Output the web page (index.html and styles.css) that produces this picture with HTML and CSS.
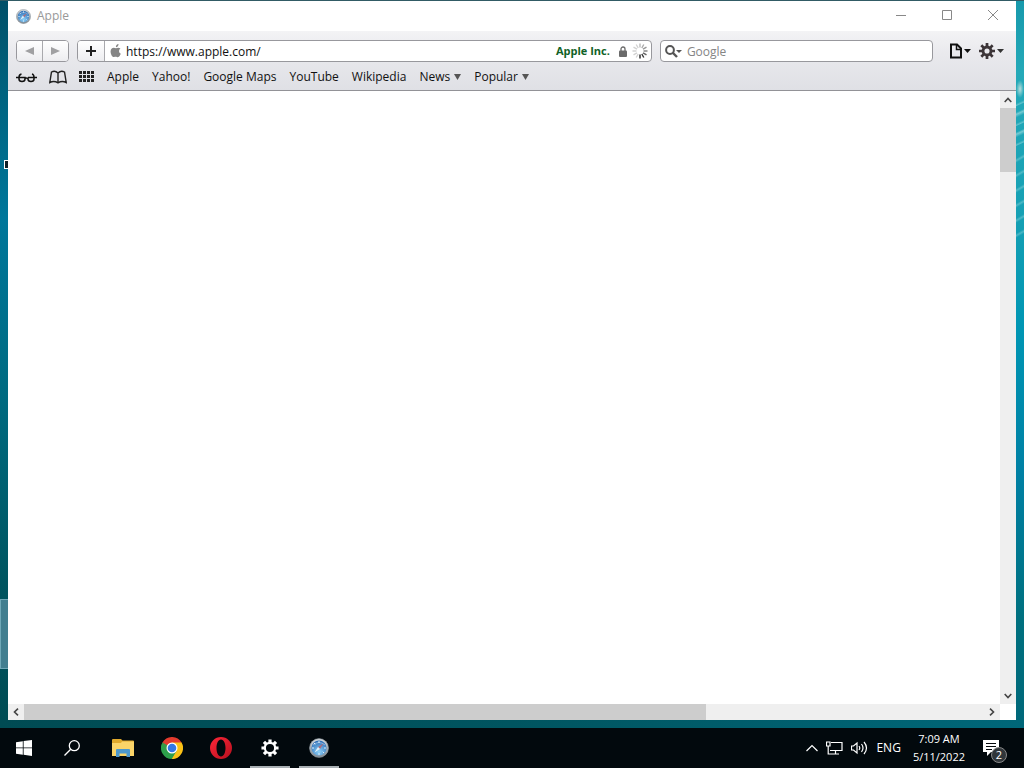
FILE: index.html
```html
<!DOCTYPE html>
<html lang="en">
<head>
<meta charset="utf-8">
<title>Apple</title>
<link rel="stylesheet" href="styles.css">
</head>
<body>
<svg class="defs" aria-hidden="true">
  <defs>
    <linearGradient id="rim" x1="0" y1="0" x2="0" y2="1"><stop offset="0" stop-color="#d5dade"/><stop offset="1" stop-color="#7f8992"/></linearGradient>
    <radialGradient id="sea" cx=".5" cy=".75" r=".7"><stop offset="0" stop-color="#8fd2f8"/><stop offset="1" stop-color="#2f70b8"/></radialGradient>
    <linearGradient id="red" x1="0" y1="0" x2="1" y2="1"><stop offset="0" stop-color="#ff2638"/><stop offset="1" stop-color="#b5101e"/></linearGradient>
    <symbol id="compass" viewBox="0 0 20 20">
      <circle cx="10" cy="10" r="9.600" fill="url(#rim)"/>
      <circle cx="10" cy="10" r="9.400" fill="none" stroke="#8a939b" stroke-width=".6"/>
      <circle cx="10" cy="10" r="7.600" fill="url(#sea)"/>
      <g stroke="#dff0fb" stroke-width="1"><path d="M10 3v2M10 15v2M3 10h2M15 10h2M5 5l1.300 1.300M13.700 13.700L15 15"/></g>
      <path d="M14.500 5.500L11 11 9 9z" fill="#b06a78"/>
      <path d="M5.500 14.500L9 9l2 2z" fill="#e4f1f8"/>
      <path d="M4 7q6-5 12 0" fill="none" stroke="#fff" stroke-opacity=".4"/>
    </symbol>
    <symbol id="cog" viewBox="0 0 20 20">
      <g stroke="currentColor" stroke-width="3.400"><path d="M10 0v5M10 15v5M0 10h5M15 10h5M2.900 2.900l3.500 3.500M13.600 13.600l3.500 3.500M2.900 17.100l3.500-3.500M13.600 6.400l3.500-3.500"/></g>
      <circle cx="10" cy="10" r="5" fill="none" stroke="currentColor" stroke-width="3.600"/>
    </symbol>
  </defs>
</svg>

<main class="desktop">
  <span class="desktop-shortcut"></span>
  <span class="desktop-selection"></span>
  <section class="window">
    <header class="titlebar">
      <svg class="title-icon" viewBox="0 0 20 20"><use href="#compass"/></svg>
      <h1 class="title">Apple</h1>
      <div class="caption-buttons">
        <button class="caption-button" aria-label="Minimize"><svg width="12" height="12" viewBox="0 0 12 12"><path d="M1 5.500h10"/></svg></button>
        <button class="caption-button" aria-label="Maximize"><svg width="12" height="12" viewBox="0 0 12 12"><path d="M1.500 .5h9v9h-9z"/></svg></button>
        <button class="caption-button" aria-label="Close"><svg width="12" height="12" viewBox="0 0 12 12"><path d="M1 0l10 10M11 0L1 10"/></svg></button>
      </div>
    </header>

    <div class="toolbar">
      <div class="controls">
        <div class="nav-buttons">
          <button class="nav-button" aria-label="Back"><svg width="10" height="8" viewBox="0 0 10 8"><path d="M9 0v8L0 4z" fill="#a0a0a2"/></svg></button>
          <button class="nav-button" aria-label="Forward"><svg width="10" height="8" viewBox="0 0 10 8"><path d="M0 0v8l9-4z" fill="#a0a0a2"/></svg></button>
        </div>
        <div class="address">
          <button class="add-button" aria-label="Add bookmark"><svg width="12" height="12" viewBox="0 0 12 12"><path d="M6 1v10M1 6h10" stroke="#222" stroke-width="2"/></svg></button>
          <svg class="favicon" width="12" height="14" viewBox="0 0 12 14"><path d="M6 4.200C4.700 3.600 3.200 3.300 2 4.200.2 5.600.2 8.500 1.400 10.900c.8 1.500 1.700 2.400 2.700 2.100.9-.4 1.800-.5 2.800 0 1.100.6 2.200-.1 3-1.500.4-.6.7-1.200.9-1.700-2.100-.9-2.400-3.900-.3-5.200C9.400 3.300 7.500 3.500 6 4.200zM8.500 0C7 .1 5.700 1.700 5.900 3.200 7.400 3.200 8.700 1.600 8.500 0z" fill="#858585"/></svg>
          <input class="address-input" type="text" aria-label="Address" value="https://www.apple.com/">
          <span class="certificate">Apple Inc.</span>
          <svg class="lock" width="8" height="11" viewBox="0 0 8 11"><path d="M2 5V3a2 2 0 0 1 4 0v2" fill="none" stroke="#6a6a6a" stroke-width="1.300"/><rect y="4.500" width="8" height="6.500" rx="1" fill="#6a6a6a"/></svg>
          <svg class="spinner" width="16" height="16" viewBox="0 0 16 16" stroke-width="1.400"><path d="M8 .5v4" stroke="#bbb"/><path d="M11.800 1.500l-2 3.500" stroke="#aaa"/><path d="M14.500 4.200L11 6.200" stroke="#999"/><path d="M15.500 8h-4" stroke="#888"/><path d="M14.500 11.800L11 9.800" stroke="#666"/><path d="M11.800 14.500l-2-3.500" stroke="#333"/><path d="M8 15.500v-4" stroke="#222"/><path d="M4.200 14.500l2-3.500M1.500 11.800L5 9.800M.5 8h4M1.500 4.200L5 6.200M4.200 1.500l2 3.500" stroke="#d2d2d2"/></svg>
        </div>
        <div class="search">
          <svg width="17" height="13" viewBox="0 0 17 13"><circle cx="5" cy="5" r="3.900" fill="none" stroke="#555" stroke-width="2"/><path d="M8 8l4 4" stroke="#555" stroke-width="2.400"/><path d="M11 5h6l-3 3z" fill="#555"/></svg>
          <input class="search-input" type="text" aria-label="Search" placeholder="Google">
        </div>
        <div class="menus">
          <button class="plain-button" aria-label="Page menu"><svg width="22" height="16" viewBox="0 0 22 16"><path d="M2 1.500h6l4 4V14.500H2z" fill="none" stroke="#111" stroke-width="2"/><path d="M7.500 1v5.500H12.500" fill="none" stroke="#111" stroke-width="1.500"/><path d="M15 6h7l-3.500 4z" fill="#111"/></svg></button>
          <button class="plain-button" aria-label="Settings menu"><svg class="dark" width="25" height="16" viewBox="0 0 25 16"><use href="#cog" width="16" height="16"/><path d="M18 6h7l-3.500 4z" fill="#333"/></svg></button>
        </div>
      </div>

      <nav class="bookmarks">
        <button class="plain-button" aria-label="Reading list"><svg width="21" height="12" viewBox="0 0 21 12"><path d="M0 6.500h9v1.500q0 2.500-3 2.500t-3-2.500V6.500M12 6.500h9M12 6.500V8q0 2.500 3 2.500t3-2.500V6.500M9 7.500q1.500-1.200 3 0M3 6.500q0-3 2.500-3.500M18 6.500q0-3-2-3.500" fill="none" stroke="#111" stroke-width="1.500"/></svg></button>
        <button class="plain-button" aria-label="Bookmarks"><svg width="18" height="14" viewBox="0 0 18 14"><path d="M9 3v9.500M9 3Q6 0 2.500 2L.8 12.500Q5 10.500 9 12.800q4-2.300 8.200-.3L15.500 2Q12 0 9 3z" fill="none" stroke="#222" stroke-width="1.400"/></svg></button>
        <button class="plain-button" aria-label="Top sites"><svg width="16" height="12" viewBox="0 0 16 12"><path d="M0 1.500h16M0 5.500h16M0 9.500h16" stroke="#222" stroke-width="3" stroke-dasharray="3 1"/></svg></button>
        <div class="links">
          <a class="link" href="#">Apple</a>
          <a class="link" href="#">Yahoo!</a>
          <a class="link" href="#">Google Maps</a>
          <a class="link" href="#">YouTube</a>
          <a class="link" href="#">Wikipedia</a>
          <button class="plain-button folder">News<svg width="7" height="6" viewBox="0 0 7 6"><path d="M0 0h7L3.500 6z" fill="#555"/></svg></button>
          <button class="plain-button folder">Popular<svg width="7" height="6" viewBox="0 0 7 6"><path d="M0 0h7L3.500 6z" fill="#555"/></svg></button>
        </div>
      </nav>
    </div>

    <div class="viewport">
      <div class="page"></div>
      <div class="scrollbar vertical">
        <button class="scroll-button" aria-label="Scroll up"><svg width="8" height="6" viewBox="0 0 8 6"><path d="M.7 5L4 1.500 7.300 5"/></svg></button>
        <div class="track"><div class="thumb"></div></div>
        <button class="scroll-button" aria-label="Scroll down"><svg width="8" height="6" viewBox="0 0 8 6"><path d="M.7 1L4 4.500 7.300 1"/></svg></button>
      </div>
      <div class="scrollbar horizontal">
        <button class="scroll-button" aria-label="Scroll left"><svg width="6" height="8" viewBox="0 0 6 8"><path d="M5 .7L1.500 4 5 7.300"/></svg></button>
        <div class="track"><div class="thumb"></div></div>
        <button class="scroll-button" aria-label="Scroll right"><svg width="6" height="8" viewBox="0 0 6 8"><path d="M1 .7L4.500 4 1 7.300"/></svg></button>
      </div>
    </div>
  </section>
</main>

<footer class="taskbar">
  <button class="system-button" aria-label="Start"><svg width="16" height="16" viewBox="0 0 16 16"><path d="M0 2.200l6.800-1v6.300H0zM7.600 1.100L16 0v7.500H7.600zM0 8.300h6.800v6.400L0 13.800zM7.600 8.300H16V16l-8.400-1.200z" fill="#fff"/></svg></button>
  <button class="system-button" aria-label="Search"><svg width="16" height="16" viewBox="0 0 16 16"><g fill="none" stroke="#fff" stroke-width="1.300"><circle cx="10.300" cy="5.700" r="5"/><path d="M6.700 9.300L.5 15.500"/></g></svg></button>
  <div class="apps">
    <button class="app" aria-label="File Explorer"><svg width="22" height="18" viewBox="0 0 22 18"><path d="M0 1q0-1 1-1h8l1.500 1.500H21q1 0 1 1V17H0z" fill="#e0a92c"/><path d="M0 4h9l1-1.500h12V17H0z" fill="#fbd468"/><path d="M4 18v-7q0-1 1-1h12q1 0 1 1v7h-3.500v-3.500h-7V18z" fill="#4d98cc"/></svg></button>
    <button class="app" aria-label="Chrome"><svg width="22" height="22" viewBox="0 0 22 22"><path d="M11 11L1.470 5.500A11 11 0 0 1 20.530 5.500z" fill="#e33b2e"/><path d="M11 11L20.530 5.500A11 11 0 0 1 11 22z" fill="#fbc116"/><path d="M11 11V22A11 11 0 0 1 1.470 5.500z" fill="#2da04b"/><path d="M11 5.500h9.530L15.800 13.700z" fill="#fbc116"/><path d="M1.470 5.500L6.300 13.800 11 5.500z" fill="#e33b2e"/><path d="M1.470 5.500L6.200 13.700 11 11z" fill="#2da04b"/><path d="M6.300 13.700L15.800 13.700 11 22z" fill="#2da04b"/><path d="M15.800 13.700L11 22h2z" fill="#fbc116"/><circle cx="11" cy="11" r="5.500" fill="#fff"/><circle cx="11" cy="11" r="4.300" fill="#3478e5"/></svg></button>
    <button class="app" aria-label="Opera"><svg width="22" height="22" viewBox="0 0 22 22"><path fill-rule="evenodd" d="M11 0a11 11 0 1 0 0 22 11 11 0 0 0 0-22zM11 2.500c2.800 0 4.500 3.700 4.500 8.500s-1.700 8.500-4.500 8.500S6.500 15.800 6.500 11 8.200 2.500 11 2.500z" fill="url(#red)"/></svg></button>
    <button class="app running" aria-label="Settings"><svg width="18" height="18" viewBox="0 0 20 20"><g stroke="#fff" stroke-width="3.600"><path d="M10 .5v4M10 15.500v4M.5 10h4M15.500 10h4M3.300 3.300l3 3M13.700 13.700l3 3M3.300 16.700l3-3M13.700 6.300l3-3"/></g><circle cx="10" cy="10" r="5.700" fill="none" stroke="#fff" stroke-width="2.400"/></svg></button>
    <button class="app running" aria-label="Safari"><svg width="20" height="20" viewBox="0 0 20 20"><use href="#compass"/></svg></button>
  </div>
  <div class="tray">
    <button class="plain-button" aria-label="Hidden icons"><svg width="12" height="8" viewBox="0 0 12 8"><path d="M.5 7L6 1.500 11.500 7"/></svg></button>
    <button class="plain-button" aria-label="Network"><svg width="17" height="14" viewBox="0 0 17 14"><path d="M5 1.500h11v8H4M.5 1v4h3.500V1zM2.200 5v8h7M9.500 10v3M6 13h7"/></svg></button>
    <button class="plain-button" aria-label="Volume"><svg width="17" height="14" viewBox="0 0 17 14"><path d="M.5 5v4h2L6 12V2L2.500 5zM8 5q1.500 2 0 4M10.500 3q3 4 0 8M13 1q5 6 0 12"/></svg></button>
    <button class="plain-button language">ENG</button>
    <button class="plain-button clock"><time>7:09 AM</time><time>5/11/2022</time></button>
    <button class="plain-button notifications" aria-label="2 notifications"><svg width="16" height="16" viewBox="0 0 16 16"><path d="M0 0h16v12H8l-4 4v-4H0z" fill="#fff" stroke="none"/><path d="M3 3.500h10M3 6.500h10M3 9.500h6" stroke="#05090c"/></svg><span class="badge">2</span></button>
  </div>
</footer>
</body>
</html>
```
FILE: styles.css
```css
* { box-sizing: border-box; }

body {
  margin: 0;
  min-height: 100vh;
  display: flex;
  flex-direction: column;
  font: 12px/16px "Open Sans", "Noto Sans", sans-serif;
  color: #111;
}

button, input { font: inherit; color: inherit; }
button { padding: 0; border: 0; background: none; display: flex; align-items: center; justify-content: center; }
input { border: 0; padding: 0; background: none; outline: 0; min-width: 0; }
svg { display: block; flex: none; }
.defs { position: absolute; width: 0; height: 0; }

.desktop {
  position: relative;
  flex: 1;
  display: flex;
  padding: 1px 8px 8px;
  background:
    linear-gradient(90deg, #004b53, #005560 50%, #006779) bottom / 100% 8px no-repeat,
    linear-gradient(#315b65, #315b65) top / 100% 1px no-repeat,
    radial-gradient(ellipse, #b8dedc, #b8dedc00 70%) right 80px / 8px 18px no-repeat,
    repeating-linear-gradient(155deg, #ffffff00 0 5px, #c9eeee60 7px, #ffffff00 8px 13px, #c9eeee80 15px, #ffffff00 18px) right 98px / 8px 50px no-repeat,
    repeating-linear-gradient(150deg, #ffffff00 0 9px, #c9eeee50 11px, #ffffff00 13px) right 148px / 8px 94px no-repeat,
    linear-gradient(#1799ac, #25a9b8 10%, #16a0b4 30%, #0096b4 45%, #0080a4 65%, #00707f 85%, #006779) right / 8px 100% no-repeat,
    linear-gradient(#004f68, #00627e 12%, #00779b 30%, #006a80 55%, #005560 80%, #004b53) left / 8px 100% no-repeat;
}

.desktop-shortcut {
  position: absolute;
  left: 4px;
  top: 160px;
  width: 8px;
  height: 9px;
  border: 1px solid #fff;
  background: #102028;
}

.desktop-selection {
  position: absolute;
  left: 0;
  top: 599px;
  width: 9px;
  height: 70px;
  border: 1px solid #70a9b8;
  background: #427f90;
}

.window {
  position: relative;
  flex: 1;
  display: flex;
  flex-direction: column;
  background: #fff;
}

.titlebar { display: flex; align-items: center; height: 30px; padding-left: 8px; gap: 6px; }
.title-icon { width: 15px; height: 15px; }
.title { flex: 1; margin: 0; font-size: 12px; font-weight: 400; color: #999; }
.caption-buttons { display: flex; }
.caption-button { width: 46px; height: 30px; }
.caption-button svg { fill: none; stroke: #888; }

.toolbar {
  height: 60px;
  padding: 9px 8px 0;
  border-bottom: 1px solid #929297;
  background: linear-gradient(#f3f3f5, #e9e9ed 40%, #dfe0e5);
}

.controls { display: flex; gap: 8px; align-items: center; }

.nav-buttons, .address, .search {
  display: flex;
  align-items: center;
  height: 22px;
  border: 1px solid #98989d;
  border-radius: 4px;
  background: #fff;
  overflow: hidden;
}

.nav-buttons { width: 53px; }
.nav-button, .add-button { align-self: stretch; background: linear-gradient(#fff, #ededf0); }
.nav-button { flex: 1; }
.nav-button + .nav-button, .add-button { border: 0 solid #a9a9ad; }
.nav-button + .nav-button { border-left-width: 1px; }
.add-button { width: 27px; border-right-width: 1px; }

.address { flex: 32; padding-right: 3px; }
.favicon { margin: 0 4px 0 5px; }
.address-input { flex: 1; padding-top: 1px; }
.certificate { font-weight: 700; font-size: 11px; color: #116227; margin-right: 9px; }
.lock { margin-right: 5px; }

.search { flex: 15; padding-left: 4px; gap: 5px; }
.search-input { flex: 1; padding-top: 1px; }
.search-input::placeholder { color: #858585; opacity: 1; }
.menus { display: flex; gap: 8px; padding: 0 4px 0 8px; }
.dark { color: #3c3538; }

.bookmarks { display: flex; align-items: center; gap: 12px; height: 30px; }
.links { display: flex; gap: 13px; }
.link { color: inherit; text-decoration: none; }
.folder { gap: 4px; }

.viewport { flex: 1; display: grid; grid-template: 1fr 16px / 1fr 16px; }
.scrollbar { display: flex; background: #efefef; }
.vertical { flex-direction: column; }
.track { flex: 1; }
.thumb { background: #cdcdcd; }
.vertical .thumb { height: 11%; }
.horizontal .thumb { width: 71%; height: 16px; }
.scroll-button { width: 16px; height: 17px; }
.horizontal .scroll-button { height: 16px; }
.scroll-button svg { fill: none; stroke: #444; stroke-width: 1.6; }

.taskbar { display: flex; height: 40px; background: #02090d; color: #fff; }
.system-button { width: 48px; }
.apps { display: flex; gap: 9px; margin-left: 7px; }
.app { width: 40px; border: 0 solid #a9b0b4; }
.app.running { border-bottom-width: 2px; padding-top: 2px; }

.tray { display: flex; align-items: center; gap: 8px; margin-left: auto; padding-right: 25px; }
.tray svg { fill: none; stroke: #fff; stroke-width: 1.2; }
.clock { flex-direction: column; line-height: 18px; margin: 0 10px 0 4px; font-size: 11px; }
.notifications { position: relative; }

.badge {
  position: absolute;
  left: 8px;
  top: 7px;
  width: 16px;
  height: 16px;
  border: 1px solid #888;
  border-radius: 50%;
  background: #30363a;
  font-size: 11px;
  line-height: 14px;
  text-align: center;
}
```
